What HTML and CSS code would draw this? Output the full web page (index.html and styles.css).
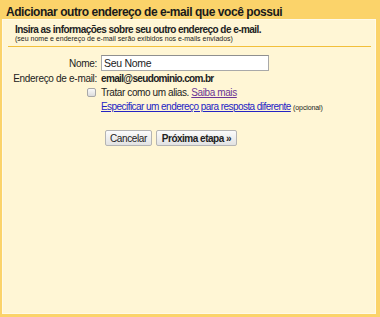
FILE: index.html
```html
<html>
  <head>
    <meta charset="utf-8">
    <link rel="stylesheet" href="styles.css">
  </head>
  <body>
    <div class="header">Adicionar outro endereço de e-mail que você possui</div>
    <div class="panel">
      <div class="intro">
        <div class="intro-title">Insira as informações sobre seu outro endereço de e-mail.</div>
        <div class="intro-note">(seu nome e endereço de e-mail serão exibidos nos e-mails enviados)</div>
      </div>
      <form class="form">
        <div class="row row-field">
          <label class="label" for="name">Nome:</label>
          <input class="field" type="text" id="name" value="Seu Nome">
        </div>
        <div class="row">
          <span class="label">Endereço de e-mail:</span>
          <span class="email">email@seudominio.com.br</span>
        </div>
        <div class="row">
          <span class="label"><span class="check"></span></span>
          <span>Tratar como um alias. <a class="visited" href="#">Saiba mais</a></span>
        </div>
        <div class="row">
          <span class="label"></span>
          <span class="reply"><a href="#">Especificar um endereço para resposta diferente</a> <span class="small">(opcional)</span></span>
        </div>
        <div class="buttons">
          <button type="button">Cancelar</button>
          <button type="button" class="primary">Próxima etapa »</button>
        </div>
      </form>
    </div>
  </body>
</html>
```

FILE: styles.css
```css
* {
  box-sizing: border-box;
}

html, body {
  height: 100%;
}

body {
  margin: 0;
  display: flex;
  flex-direction: column;
  background-color: #fbd36a;
  font-family: Arial, "Liberation Sans", sans-serif;
  font-size: 10px;
  letter-spacing: -0.4px;
  color: #222;
}

.header {
  height: 19px;
  padding: 5px 6px 0;
  line-height: 14px;
  font-size: 12px;
  font-weight: bold;
  letter-spacing: -0.45px;
  color: #1a1a1a;
}

.panel {
  flex: 1;
  margin: 0 4px 3px 2px;
  border: 1px solid #fffae8;
  background-color: #fff6d5;
}

.intro {
  margin: 0 4px 0 5px;
  padding: 4px 7px 3px;
  border-bottom: 1px solid #f2bf3a;
}

.intro-title {
  font-weight: bold;
  line-height: 11px;
  letter-spacing: -0.55px;
}

.intro-note {
  font-size: 7px;
  line-height: 8px;
  letter-spacing: 0;
}

.form {
  margin: 8px 0 0;
}

.row {
  display: flex;
  align-items: center;
  height: 14px;
  white-space: nowrap;
}

.row-field {
  height: 16px;
}

.label {
  width: 97px;
  padding-right: 3px;
  display: flex;
  justify-content: flex-end;
  letter-spacing: -0.3px;
}

.field {
  width: 168px;
  height: 16px;
  margin-left: 1px;
  padding: 0 2px;
  border: 1px solid #a9a9a9;
  border-top-color: #8f8f8f;
  font-family: inherit;
  font-size: 10.5px;
  letter-spacing: -0.3px;
  color: #222;
  background: #fff;
}

.email {
  margin-left: 1px;
  font-weight: bold;
  letter-spacing: -0.65px;
}

.check {
  display: block;
  width: 9px;
  height: 9px;
  margin-right: 1px;
  border: 1px solid #a8a8a8;
  border-radius: 2px;
  background: linear-gradient(#fafafa, #dcdcdc);
}

.row .label + span {
  margin-left: 1px;
}

.reply {
  letter-spacing: -0.55px;
}

a {
  color: #2424c4;
}

a.visited {
  color: #6b3596;
}

.small {
  font-size: 7px;
  letter-spacing: -0.1px;
}

.buttons {
  display: flex;
  gap: 4px;
  margin: 17px 0 0 102px;
}

button {
  height: 16px;
  padding: 0 4px;
  border: 1px solid #b4b4b4;
  border-radius: 2px;
  background: linear-gradient(#fbfbfb, #e2e2e2);
  font-family: inherit;
  font-size: 10px;
  letter-spacing: -0.4px;
  color: #222;
}

button.primary {
  padding: 0 5px;
  font-weight: bold;
  letter-spacing: -0.5px;
}
```
